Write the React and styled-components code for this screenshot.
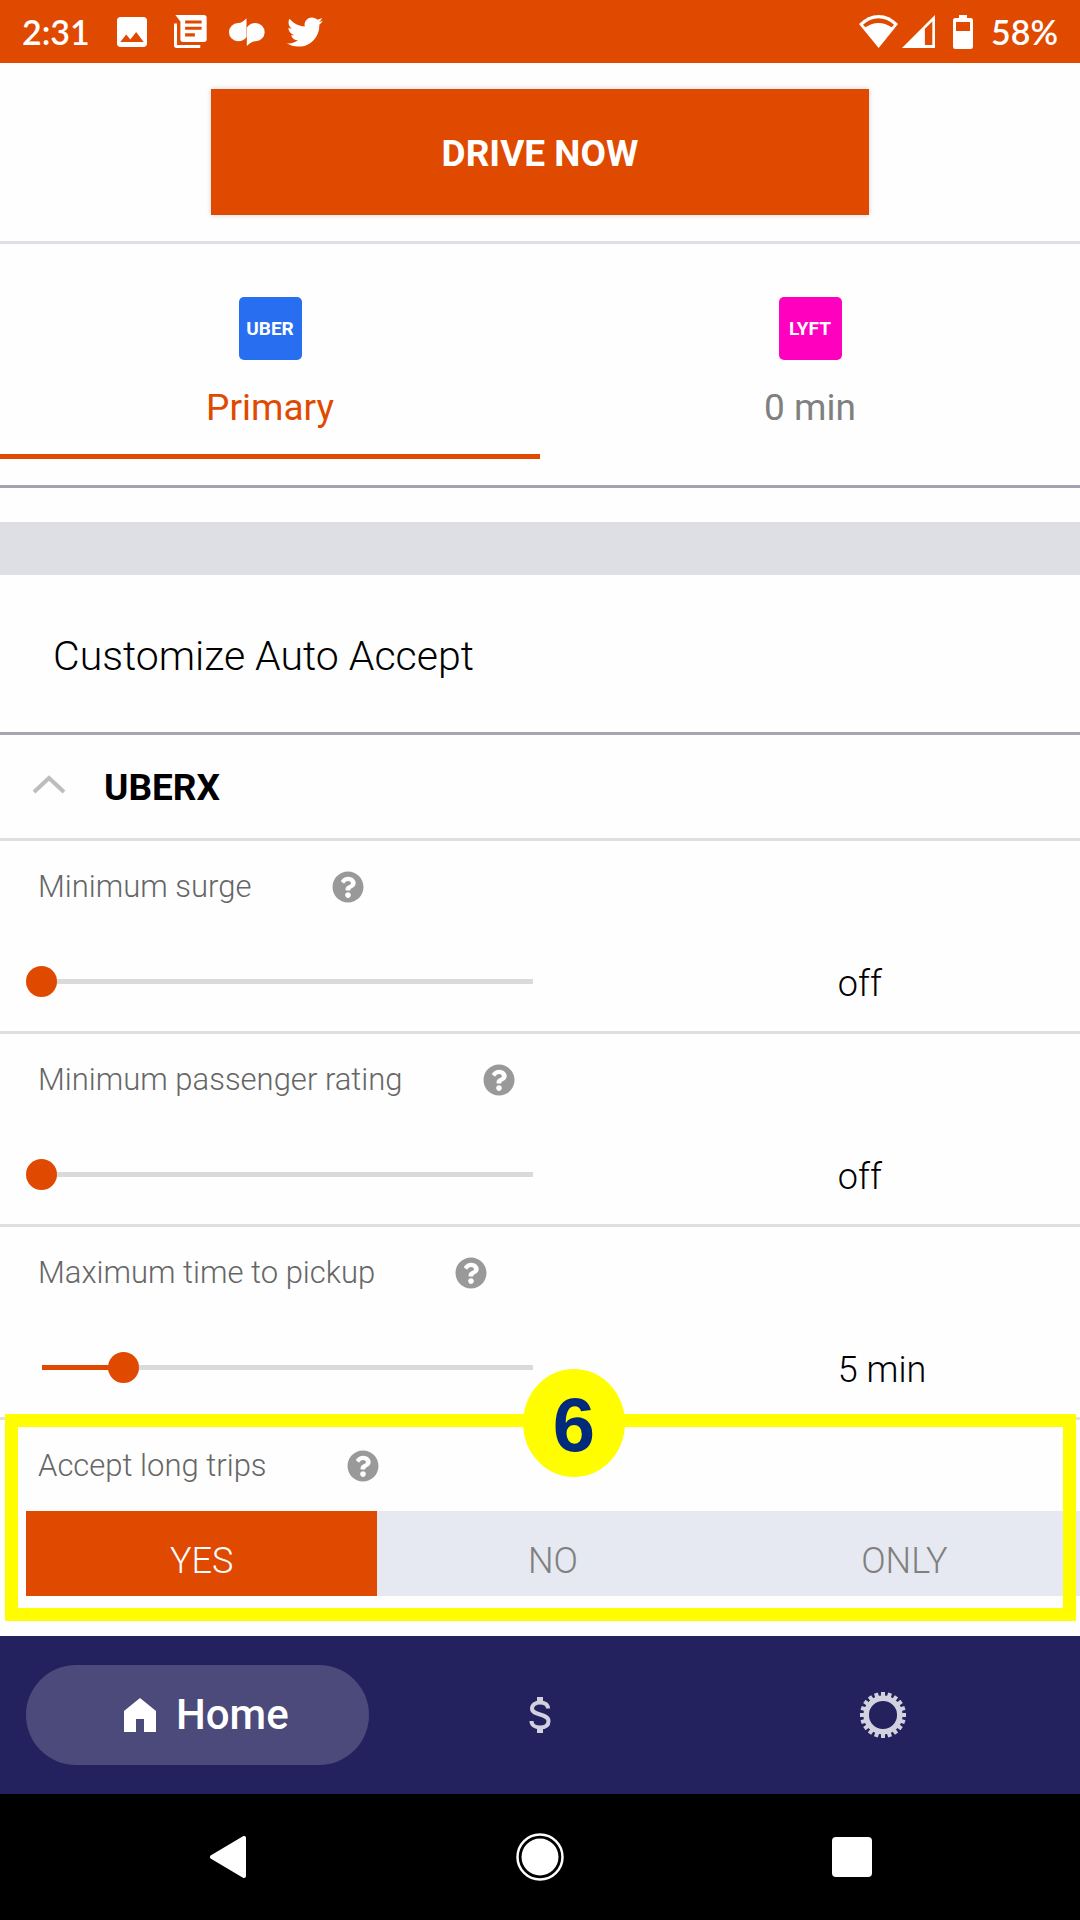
import React, { useState } from "react";
import styled, { createGlobalStyle, css } from "styled-components";
import { FaQuestionCircle, FaTwitter } from "react-icons/fa";
import { MdImage } from "react-icons/md";

const orange = "#e04a00";
const navy = "#24225e";

const GlobalStyle = createGlobalStyle`
  *, *::before, *::after { box-sizing: border-box; }
  body { margin: 0; background: #fff; }
  button, input { font: inherit; color: inherit; }
`;

const Screen = styled.div`
  display: flex;
  flex-direction: column;
  min-height: 100vh;
  font-family: Roboto, "Liberation Sans", sans-serif;
  font-size: 37px;
  line-height: 44px;
  color: #000;
  background: #fefefe;
`;

const StatusBar = styled.header`
  display: flex;
  justify-content: space-between;
  align-items: center;
  height: 63px;
  padding: 0 22px;
  background: ${orange};
  color: #fff;
  font-family: Lato, Roboto, sans-serif;
  font-size: 34px;
  font-weight: 600;
`;

const StatusGroup = styled.div`
  display: flex;
  align-items: center;
  gap: ${(p) => p.$gap}px;
  svg { display: block; }
`;

const DriveArea = styled.div`
  display: flex;
  justify-content: center;
  padding: 26px 0;
  border-bottom: 3px solid #dfdfe6;
`;

const DriveButton = styled.button`
  width: 61%;
  height: 126px;
  padding-top: 4px;
  border: 0;
  background: ${orange};
  color: #fff;
  font-weight: 700;
  box-shadow: 0 0 5px rgba(0, 0, 0, 0.18);
`;

const Tabs = styled.div`
  display: grid;
  grid-template-columns: 1fr 1fr;
  padding-bottom: 26px;
  border-bottom: 3px solid #a3a2b0;
`;

const Tab = styled.button`
  display: flex;
  flex-direction: column;
  align-items: center;
  gap: 26px;
  padding: 53px 0 24px;
  border: 0;
  border-bottom: 5px solid ${(p) => (p.$active ? orange : "transparent")};
  background: none;
  color: ${(p) => (p.$active ? orange : "#808080")};
`;

const ServiceTile = styled.span`
  display: flex;
  align-items: center;
  justify-content: center;
  width: 63px;
  height: 63px;
  border-radius: 5px;
  background: ${(p) => p.$color};
  color: #fff;
  font-size: 19px;
  font-weight: 700;
`;

const Band = styled.div`
  height: 53px;
  margin-top: 34px;
  background: #dedfe4;
`;

const Title = styled.h1`
  margin: 0;
  padding: 59px 53px 54px;
  border-bottom: 3px solid #a6a6b3;
  font-size: 41px;
  font-weight: 300;
`;

const GroupHeader = styled.button`
  display: flex;
  align-items: center;
  gap: 38px;
  width: 100%;
  height: 106px;
  padding: 2px 32px 0;
  border: 0;
  border-bottom: 3px solid #dfdfdf;
  background: none;
  font-weight: 700;
  text-align: left;
  svg { display: block; margin-bottom: 6px; }
`;

const Setting = styled.section`
  display: flex;
  flex-direction: column;
  gap: 45px;
  padding: 27px 0 20px 26px;
  border-bottom: 3px solid #dfdfdf;
`;

const SettingHead = styled.div`
  display: flex;
  align-items: center;
  gap: 80px;
  padding-left: 12px;
  font-size: 31px;
  font-weight: 300;
  line-height: 38px;
  color: #666;
`;

const HelpButton = styled.button`
  display: flex;
  padding: 0;
  border: 0;
  background: none;
  color: #999;
`;

const SettingControl = styled.div`
  display: grid;
  grid-template-columns: 522fr 289fr 242fr;
  align-items: center;
  height: 60px;
`;

const Value = styled.output`
  grid-column: 3;
  padding-top: 6px;
  font-size: 36px;
  font-weight: 300;
`;

const thumb = css`
  width: 31px;
  height: 31px;
  border: 0;
  border-radius: 50%;
  background: ${orange};
`;

const Slider = styled.input`
  appearance: none;
  width: 100%;
  height: 31px;
  margin: 0;
  background:
    linear-gradient(90deg, ${orange} var(--fill), #dadada var(--fill))
    center / calc(100% - 31px) 5px no-repeat;
  &::-webkit-slider-thumb { appearance: none; ${thumb} }
  &::-moz-range-thumb { ${thumb} }
`;

const TripSection = styled.section`
  position: relative;
  display: flex;
  flex-direction: column;
  gap: 26px;
  padding: 27px 0 40px 26px;
`;

const Segments = styled.div`
  display: grid;
  grid-template-columns: repeat(3, 1fr);
  height: 85px;
  background: #e6e9f1;
`;

const Segment = styled.label`
  position: relative;
  display: flex;
  align-items: center;
  justify-content: center;
  padding-top: 15px;
  font-size: 36px;
  font-weight: 300;
  color: #808080;
  &:has(input:checked) { background: ${orange}; color: #fff; }
`;

const SegmentRadio = styled.input`
  position: absolute;
  inset: 0;
  width: 100%;
  height: 100%;
  margin: 0;
  opacity: 0;
`;

const Highlight = styled.div`
  position: absolute;
  inset: -6px 4px 15px 5px;
  border: 13px solid #fffd00;
  pointer-events: none;
`;

const StepBadge = styled.span`
  position: absolute;
  top: -51px;
  left: calc(50% + 34px);
  display: flex;
  align-items: center;
  justify-content: center;
  width: 102px;
  height: 108px;
  padding-top: 4px;
  border-radius: 50%;
  background: #fffd00;
  color: #002b7d;
  font-family: "Liberation Sans", sans-serif;
  font-size: 76px;
  font-weight: 700;
  transform: translateX(-50%);
`;

const AppNav = styled.nav`
  display: grid;
  grid-template-columns: repeat(3, 1fr);
  align-items: center;
  height: 158px;
  margin-top: auto;
  padding: 0 26px;
  background: ${navy};
`;

const NavButton = styled.button`
  display: flex;
  align-items: center;
  justify-content: center;
  gap: 20px;
  height: 100px;
  padding: 0 0 0 ${(p) => (p.$active ? 18 : 0)}px;
  border: 0;
  border-radius: 50px;
  background: ${(p) => (p.$active ? "#4b4a7a" : "none")};
  color: ${(p) => (p.$active ? "#fff" : "#d2d1df")};
  font-size: 42px;
  font-weight: 500;
  svg { display: block; }
`;

const SystemNav = styled.nav`
  display: flex;
  align-items: center;
  justify-content: space-around;
  height: 126px;
  padding: 0 72px;
  background: #000;
`;

const SystemButton = styled.button`
  display: flex;
  align-items: center;
  justify-content: center;
  width: 100px;
  height: 100px;
  padding: 0;
  border: 0;
  background: none;
`;

const LibraryIcon = () => (
  <svg width="33" height="33" viewBox="525 45 98 98" fill="#fff">
    <path d="M529 45H614Q622 45 622 53V117Q622 125 614 125H552Q544 125 544 117V64Z" />
    <path d="M525 70H534V134H603V143H533Q525 143 525 135Z" />
    <path d="M558 61h49v9h-49zM558 80h49v9h-49zM558 99h29v10h-29z" fill={orange} />
  </svg>
);

const ChatIcon = () => (
  <svg width="36" height="28" viewBox="694 53 107 83" fill="#fff">
    <path d="M746 54V109Q737 122 721 122A27 27 0 0 1 721 68Q734 68 746 54Z" />
    <path d="M747 136V81Q757 68 773 68A27 27 0 0 1 773 122Q760 122 747 136Z" />
  </svg>
);

const WifiIcon = () => (
  <svg width="39" height="33" viewBox="123 42 117 99" fill="#fff">
    <path d="M182 141L123 69Q150 42 182 42T240 69Z" />
    <path d="M135 71Q182 33 228 71L221 79Q182 53 142 79Z" fill={orange} />
  </svg>
);

const SignalIcon = () => (
  <svg width="33" height="33" viewBox="250 42 98 98" fill="#fff">
    <path d="M250 140L348 42V140Z" />
    <path d="M318 83L340 61V131H318Z" fill={orange} />
  </svg>
);

const BatteryIcon = () => (
  <svg width="20" height="34" viewBox="405 42 60 102" fill="#fff">
    <path d="M423 42H447V51H458Q465 51 465 58V137Q465 144 458 144H412Q405 144 405 137V58Q405 51 412 51H423Z" />
    <path d="M414 63H456V90H414Z" fill={orange} />
  </svg>
);

const HouseIcon = () => (
  <svg width="32" height="34" viewBox="0 0 32 34" fill="currentColor">
    <path d="M16 0L32 13V34H20V21H12V34H0V13Z" />
  </svg>
);

const DollarIcon = () => (
  <svg width="22" height="36" viewBox="0 0 22 36" fill="none" stroke="currentColor" strokeWidth="4">
    <path d="M19 11.500C19 7.500 15.500 5.500 11 5.500S3 8 3 11.500C3 19 19.500 16 19.500 24C19.500 28.500 16 30.500 11 30.500S2.500 28 2.500 24" />
    <path d="M11 0V6M11 30V36" strokeWidth="6" />
  </svg>
);

const GearIcon = () => (
  <svg width="46" height="46" viewBox="-23 -23 46 46" fill="none" stroke="currentColor">
    <circle r="16.800" strokeWidth="5.500" />
    {Array.from({ length: 20 }, (_, i) => (
      <path key={i} d="M0 -18V-23" strokeWidth="4" transform={`rotate(${i * 18})`} />
    ))}
  </svg>
);

const Help = ({ topic }) => (
  <HelpButton type="button" aria-label={`Help: ${topic}`}>
    <FaQuestionCircle size={32} />
  </HelpButton>
);

function SliderSetting({ id, label, max, initial, format }) {
  const [value, setValue] = useState(initial);
  return (
    <Setting>
      <SettingHead>
        <label htmlFor={id}>{label}</label>
        <Help topic={label} />
      </SettingHead>
      <SettingControl>
        <Slider
          id={id}
          type="range"
          min="0"
          max={max}
          value={value}
          onChange={(e) => setValue(Number(e.target.value))}
          style={{ "--fill": `${(value / max) * 100}%` }}
        />
        <Value htmlFor={id}>{format(value)}</Value>
      </SettingControl>
    </Setting>
  );
}

const services = [
  { name: "UBER", color: "#276ef1", status: "Primary" },
  { name: "LYFT", color: "#ff00bf", status: "0 min" },
];

const offOr = (unit) => (v) => (v === 0 ? "off" : `${v}${unit}`);

export default function App() {
  const [service, setService] = useState("UBER");
  const [longTrips, setLongTrips] = useState("YES");

  return (
    <Screen>
      <GlobalStyle />
      <StatusBar>
        <StatusGroup $gap={22}>
          <span>2:31</span>
          <MdImage size={40} />
          <LibraryIcon />
          <ChatIcon />
          <FaTwitter size={36} />
        </StatusGroup>
        <StatusGroup $gap={18}>
          <StatusGroup $gap={4}>
            <WifiIcon />
            <SignalIcon />
          </StatusGroup>
          <BatteryIcon />
          <span>58%</span>
        </StatusGroup>
      </StatusBar>

      <main>
        <DriveArea>
          <DriveButton type="button">DRIVE NOW</DriveButton>
        </DriveArea>

        <Tabs role="tablist">
          {services.map((s) => (
            <Tab
              key={s.name}
              type="button"
              role="tab"
              aria-selected={service === s.name}
              $active={service === s.name}
              onClick={() => setService(s.name)}
            >
              <ServiceTile $color={s.color}>{s.name}</ServiceTile>
              <span>{s.status}</span>
            </Tab>
          ))}
        </Tabs>

        <Band />
        <Title>Customize Auto Accept</Title>

        <GroupHeader type="button" aria-expanded="true">
          <svg width="34" height="20" viewBox="0 0 34 20" fill="none" stroke="#bdbdbd" strokeWidth="4">
            <path d="M2 17L17 3L32 17" />
          </svg>
          UBERX
        </GroupHeader>

        <SliderSetting id="surge" label="Minimum surge" max={30} initial={0} format={offOr("x")} />
        <SliderSetting id="rating" label="Minimum passenger rating" max={5} initial={0} format={offOr("")} />
        <SliderSetting id="pickup" label="Maximum time to pickup" max={30} initial={5} format={offOr(" min")} />

        <TripSection>
          <SettingHead>
            <span id="long-trips">Accept long trips</span>
            <Help topic="Accept long trips" />
          </SettingHead>
          <Segments role="radiogroup" aria-labelledby="long-trips">
            {["YES", "NO", "ONLY"].map((option) => (
              <Segment key={option}>
                <SegmentRadio
                  type="radio"
                  name="long-trips"
                  checked={longTrips === option}
                  onChange={() => setLongTrips(option)}
                />
                {option}
              </Segment>
            ))}
          </Segments>
          <Highlight />
          <StepBadge>6</StepBadge>
        </TripSection>
      </main>

      <AppNav>
        <NavButton type="button" $active>
          <HouseIcon />
          Home
        </NavButton>
        <NavButton type="button" aria-label="Earnings">
          <DollarIcon />
        </NavButton>
        <NavButton type="button" aria-label="Settings">
          <GearIcon />
        </NavButton>
      </AppNav>

      <SystemNav>
        <SystemButton type="button" aria-label="Back">
          <svg width="38" height="42" viewBox="0 0 38 42" fill="#fff" stroke="#fff" strokeWidth="4" strokeLinejoin="round">
            <path d="M3 21L35 2V40Z" />
          </svg>
        </SystemButton>
        <SystemButton type="button" aria-label="Home screen">
          <svg width="48" height="48" viewBox="0 0 48 48" fill="#fff">
            <circle cx="24" cy="24" r="18.500" />
            <circle cx="24" cy="24" r="22.500" fill="none" stroke="#fff" strokeWidth="2.500" />
          </svg>
        </SystemButton>
        <SystemButton type="button" aria-label="Recent apps">
          <svg width="40" height="40" viewBox="0 0 40 40" fill="#fff">
            <rect width="40" height="40" rx="4" />
          </svg>
        </SystemButton>
      </SystemNav>
    </Screen>
  );
}
